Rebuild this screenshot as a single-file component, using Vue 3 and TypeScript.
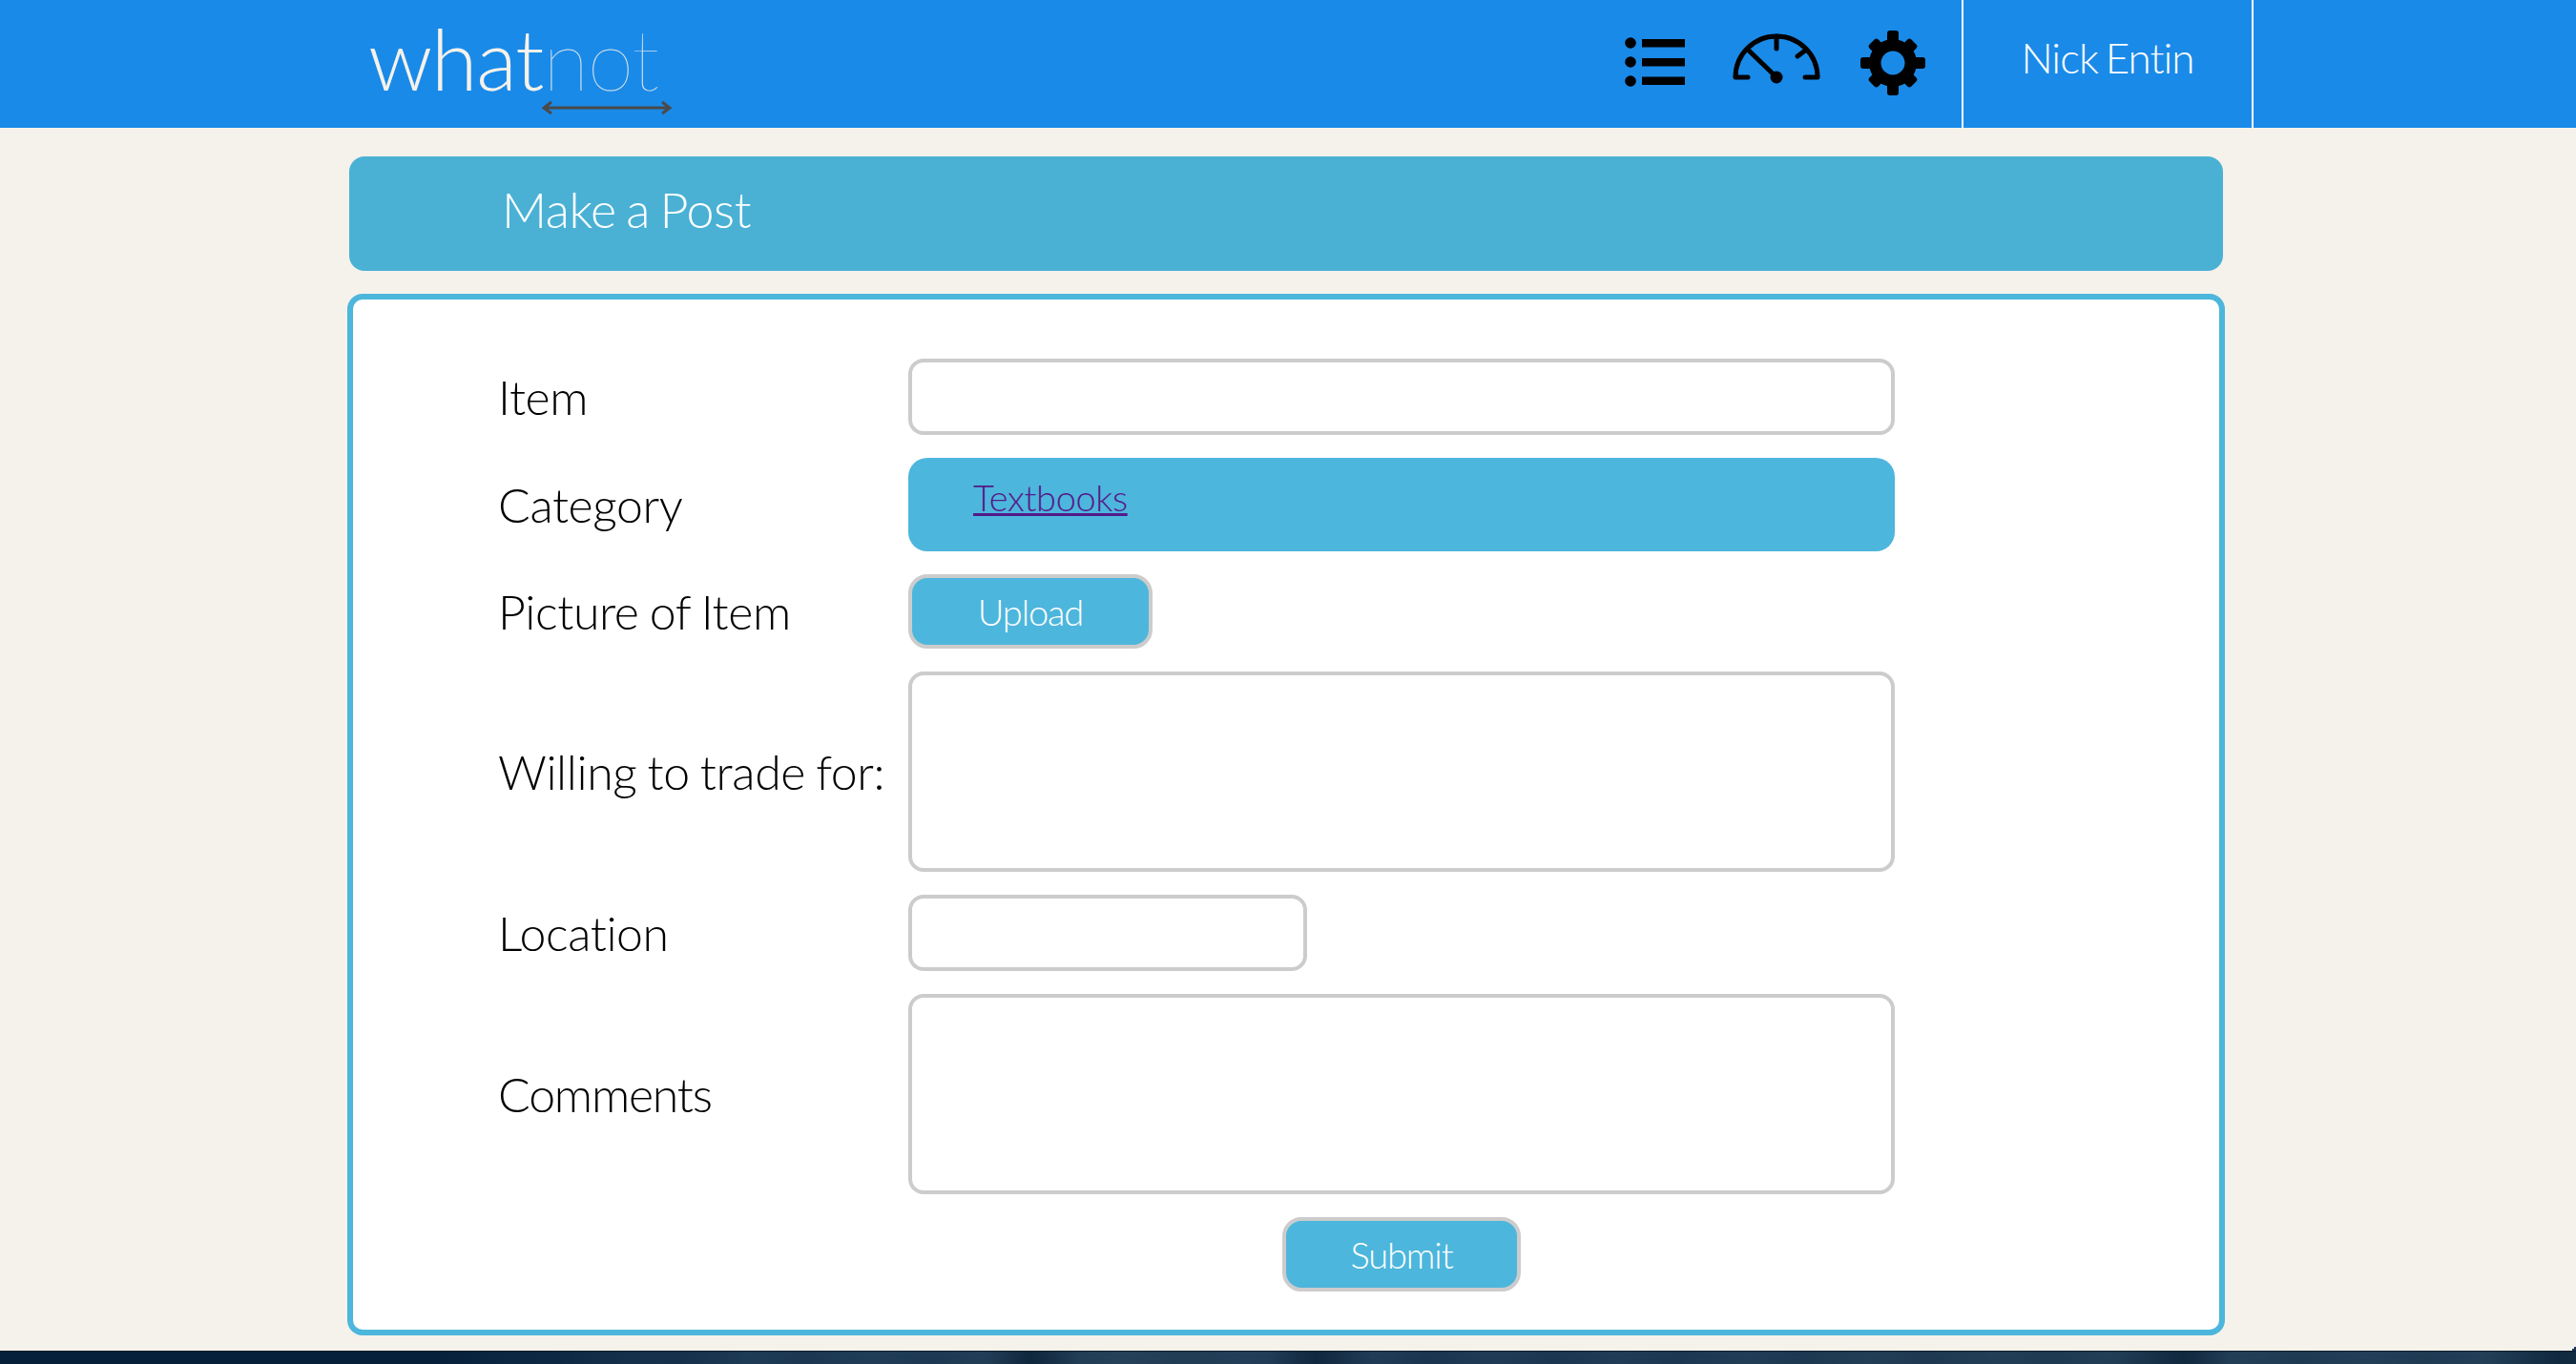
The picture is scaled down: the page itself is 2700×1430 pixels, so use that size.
<script setup lang="ts">
const rows: { label: string; kind: string; tight?: boolean }[] = [
  { label: 'Item', kind: 'input' },
  { label: 'Category', kind: 'select' },
  { label: 'Picture of Item', kind: 'upload' },
  { label: 'Willing to trade for:', kind: 'area' },
  { label: 'Location', kind: 'short' },
  { label: 'Comments', kind: 'area', tight: true },
]
const straightTeeth = [0, 90, 180, 270]
const diagonalTeeth = [45, 135, 225, 315]
</script>

<template>
  <div class="page">
    <header class="top">
      <div class="brand">
        <div class="logo"><span class="what">what</span><span class="not">not</span></div>
        <svg class="arrow" width="136" height="16" viewBox="0 0 136 16">
          <path d="M2 8H134M10 2L2 8L10 14M126 2L134 8L126 14" fill="none" stroke="#4a4a4a" stroke-width="3" />
        </svg>
      </div>
      <nav class="icons">
        <svg class="ic-list" width="64" height="52" viewBox="0 0 64 52">
          <circle cx="6" cy="6" r="5.8" /><circle cx="6" cy="26" r="5.8" /><circle cx="6" cy="46" r="5.8" />
          <rect x="18" y="2" width="45" height="8.5" /><rect x="18" y="22" width="45" height="8.5" /><rect x="18" y="41.5" width="45" height="8.5" />
        </svg>
        <svg class="ic-gauge" width="92" height="54" viewBox="0 0 92 54">
          <path d="M3 47A43 43 0 0 1 89 47" fill="none" stroke="#000" stroke-width="5" />
          <path d="M3 47H16M89 47H76M46 4V17M76 19L68 25M17 19L46 47" fill="none" stroke="#000" stroke-width="5" stroke-linecap="round" />
          <circle cx="46" cy="47" r="6.5" />
        </svg>
        <svg class="ic-gear" width="68" height="68" viewBox="0 0 68 68">
          <path fill-rule="evenodd" d="M34 9A25 25 0 1 1 34 59A25 25 0 1 1 34 9ZM34 21.5A12.5 12.5 0 1 0 34 46.5A12.5 12.5 0 1 0 34 21.5Z" />
          <rect v-for="a in straightTeeth" :key="a" x="28" y="0" width="12" height="13" rx="3" :transform="`rotate(${a} 34 34)`" />
          <rect v-for="a in diagonalTeeth" :key="a" x="27.5" y="3" width="13" height="11" rx="3" :transform="`rotate(${a} 34 34)`" />
        </svg>
      </nav>
      <div class="user">Nick Entin</div>
    </header>

    <main class="content">
      <div class="title">Make a Post</div>
      <form class="card" @submit.prevent>
        <div v-for="row in rows" :key="row.label" class="row">
          <label class="label" :class="{ tight: row.tight }">{{ row.label }}</label>
          <input v-if="row.kind === 'input'" class="field wide" type="text" />
          <div v-else-if="row.kind === 'select'" class="select"><a href="#" class="link">Textbooks</a></div>
          <button v-else-if="row.kind === 'upload'" type="button" class="btn upload">Upload</button>
          <textarea v-else-if="row.kind === 'area'" class="field wide area"></textarea>
          <input v-else class="field short" type="text" />
        </div>
        <div class="submit-row"><button type="submit" class="btn submit">Submit</button></div>
      </form>
    </main>

    <footer class="foot"><span class="corner"></span></footer>
  </div>
</template>

<style scoped>
.page { width: 2700px; height: 1430px; display: flex; flex-direction: column; background: #f5f2eb; font-family: Lato, "Liberation Sans", sans-serif; font-weight: 300; overflow: hidden; }
.top { height: 134px; flex: none; background: #1a8ae8; display: flex; align-items: stretch; padding-left: 386px; }
.brand { width: 1317px; position: relative; }
.logo { font-size: 88px; line-height: 122px; color: #f5f2eb; white-space: nowrap; letter-spacing: -1.2px; }
.what { font-weight: 300; }
.not { font-weight: 100; opacity: .85; }
.arrow { position: absolute; left: 182px; top: 105px; }
.icons { width: 353px; display: flex; align-items: flex-start; }
.ic-list { margin-top: 39px; }
.ic-gauge { margin: 34px 0 0 49px; }
.ic-gear { margin: 32px 0 0 42px; }
.user { width: 306px; border-left: 2px solid #fff; border-right: 2px solid #fff; color: #fff; font-size: 44px; letter-spacing: -1px; word-spacing: -3px; display: flex; align-items: center; justify-content: center; padding-bottom: 14px; box-sizing: border-box; }
.content { flex: 1; padding: 30px 0 0 366px; width: 1964px; }
.title { height: 120px; background: #4ab1d5; border-radius: 16px; color: #fff; font-size: 52px; line-height: 111px; padding-left: 160px; letter-spacing: -.5px; word-spacing: -3px; }
.card { margin: 24px 0 0 -2px; width: 1968px; height: 1092px; box-sizing: border-box; background: #fff; border: 6px solid #4db6dc; border-radius: 16px; padding: 62px 0 0 152px; display: flex; flex-direction: column; gap: 24px; }
.row { display: flex; align-items: center; }
.label { width: 430px; flex: none; font-size: 50px; color: #000; white-space: nowrap; letter-spacing: -.4px; word-spacing: -2px; }
.label.tight { letter-spacing: -1.2px; }
.field { display: block; box-sizing: border-box; border: 4px solid #ccc; border-radius: 16px; background: #fff; height: 80px; outline: none; padding: 0; resize: none; margin: 0; }
.wide { width: 1034px; }
.short { width: 418px; }
.area { height: 210px; }
.select { width: 1034px; height: 98px; box-sizing: border-box; background: #4db6dc; border-radius: 20px; padding: 18px 0 0 68px; font-size: 38px; line-height: 46px; letter-spacing: -.4px; }
.link { color: #551a8b; text-decoration: underline; }
.btn { box-sizing: border-box; background: #4db6dc; border: 4px solid #ccc; border-radius: 20px; color: #fff; font: 300 38px Lato, "Liberation Sans", sans-serif; letter-spacing: -1.1px; height: 78px; padding: 0; margin: 0; }
.upload { width: 256px; }
.submit { width: 250px; }
.submit-row { padding-left: 822px; }
.foot { height: 14px; flex: none; position: relative; border-top: 1px solid #0c1c2a; box-sizing: border-box;
  background:
    linear-gradient(90deg, #06203a 450px, transparent 800px),
    linear-gradient(90deg, transparent 1030px, rgba(8,30,50,.7) 1080px, transparent 1130px, transparent 1330px, rgba(8,30,50,.6) 1380px, transparent 1440px, transparent 2210px, rgba(8,30,50,.6) 2290px, transparent 2340px, transparent 2600px, rgba(8,30,50,.6) 2680px),
    repeating-linear-gradient(96deg, rgba(70,100,125,.12) 0, transparent 60px, rgba(70,100,125,.12) 130px),
    linear-gradient(90deg, #1a3650 800px, #213c54 1200px, #1a3550 1500px, #1d3850 2000px, #1f3b54 2700px); }
.corner { position: absolute; right: 0; top: -5px; width: 4px; height: 4px; background: #1a3550; clip-path: polygon(50% 0, 100% 0, 100% 100%, 0 100%, 0 50%, 50% 50%); }
</style>
